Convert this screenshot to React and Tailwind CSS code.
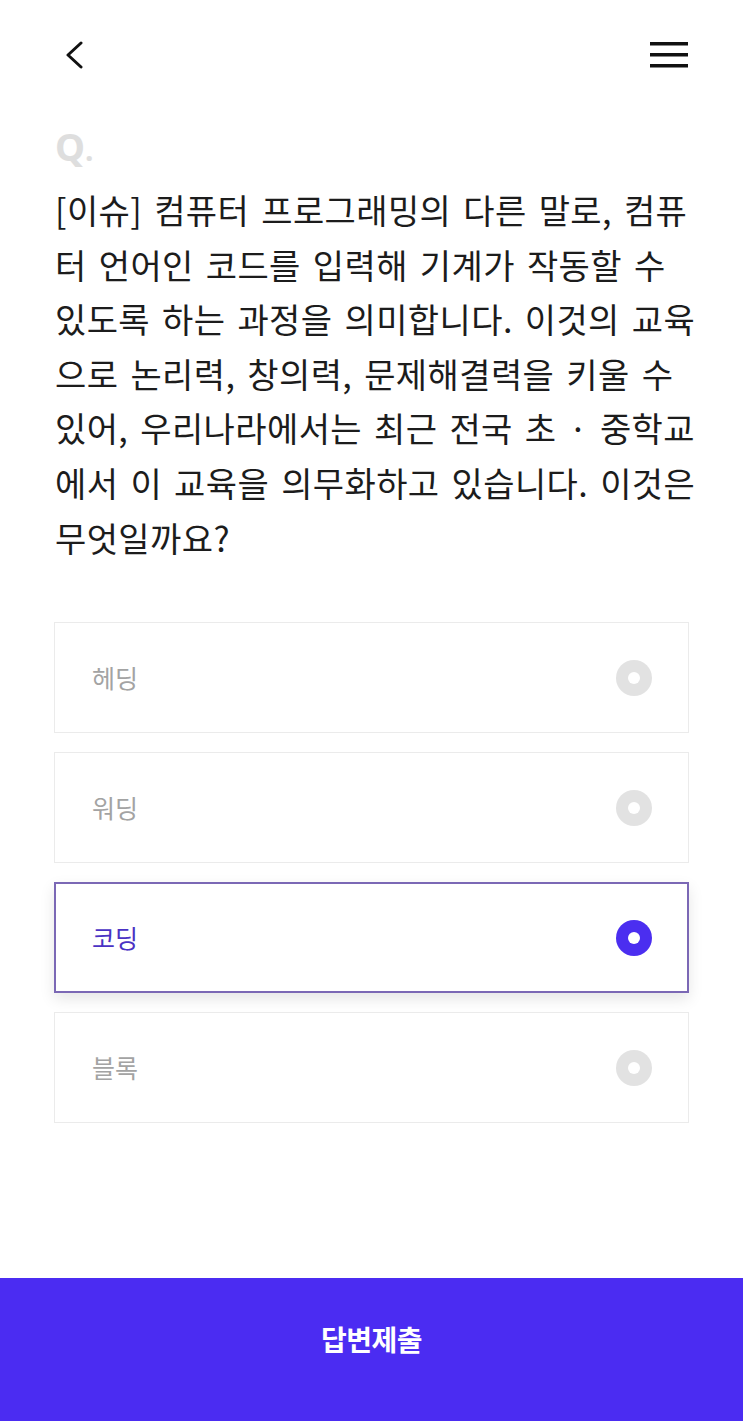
import { useState } from 'react'

const lines = [
  '[이슈] 컴퓨터 프로그래밍의 다른 말로, 컴퓨',
  '터 언어인 코드를 입력해 기계가 작동할 수',
  '있도록 하는 과정을 의미합니다. 이것의 교육',
  '으로 논리력, 창의력, 문제해결력을 키울 수',
  '있어, 우리나라에서는 최근 전국 초 · 중학교',
  '에서 이 교육을 의무화하고 있습니다. 이것은',
  '무엇일까요?',
]

const options = ['헤딩', '워딩', '코딩', '블록']

const font = { fontFamily: '"Noto Sans CJK KR", "Noto Sans", sans-serif' }

export default function App() {
  const [selected, setSelected] = useState(2)

  return (
    <div className="w-[743px] h-[1421px] bg-white flex flex-col" style={font}>
      {/* header */}
      <div className="h-[110px] flex items-center justify-between pl-[64px] pr-[55px] shrink-0">
        <svg width="20" height="28" viewBox="0 0 20 28" fill="none">
          <path d="M17 2 L4 14 L17 26" stroke="#111" strokeWidth="3" strokeLinecap="round" strokeLinejoin="round" />
        </svg>
        <svg width="38" height="26" viewBox="0 0 38 26" fill="none">
          <rect x="0" y="0" width="38" height="3.5" fill="#111" />
          <rect x="0" y="11" width="38" height="3.5" fill="#111" />
          <rect x="0" y="22" width="38" height="3.5" fill="#111" />
        </svg>
      </div>

      <div className="px-[55px] flex flex-col flex-1">
        <div className="text-[38px] font-bold leading-none text-[#dedede] mt-[17px]" style={{ fontFamily: '"Noto Sans", sans-serif' }}>
          Q<span className="text-[30px]">.</span>
        </div>

        <div className="mt-[18px] text-[34px] leading-[54.6px] text-[#1c1c1c] tracking-[0.4px]" style={{ wordSpacing: '4px' }}>
          {lines.map((l, i) => (
            <div key={i} className="whitespace-nowrap">{l}</div>
          ))}
        </div>

        <div className="mt-[57px] -mx-[1px] flex flex-col gap-[19px]">
          {options.map((o, i) => {
            const on = i === selected
            return (
              <button
                key={o}
                onClick={() => setSelected(i)}
                className={
                  on
                    ? 'h-[111px] w-full flex items-center justify-between pl-[36px] pr-[35px] border-2 border-[#7b68b5] bg-white shadow-[0_6px_14px_rgba(0,0,0,0.10)]'
                    : 'h-[111px] w-full flex items-center justify-between pl-[37px] pr-[36px] border border-[#ebebeb] bg-white'
                }
              >
                <span className={on ? 'text-[25px] text-[#4a32c4]' : 'text-[25px] text-[#a3a3a3]'}>{o}</span>
                <span
                  className={
                    on
                      ? 'w-[36px] h-[36px] rounded-full bg-[#4b2ef0] flex items-center justify-center'
                      : 'w-[36px] h-[36px] rounded-full bg-[#e2e2e2] flex items-center justify-center'
                  }
                >
                  <span className="w-[12px] h-[12px] rounded-full bg-white" />
                </span>
              </button>
            )
          })}
        </div>
      </div>

      <button className="h-[143px] w-full bg-[#4b2cf2] shrink-0 flex items-center justify-center pb-[22px] text-white text-[28px] font-bold tracking-[-0.5px]">
        답변제출
      </button>
    </div>
  )
}
